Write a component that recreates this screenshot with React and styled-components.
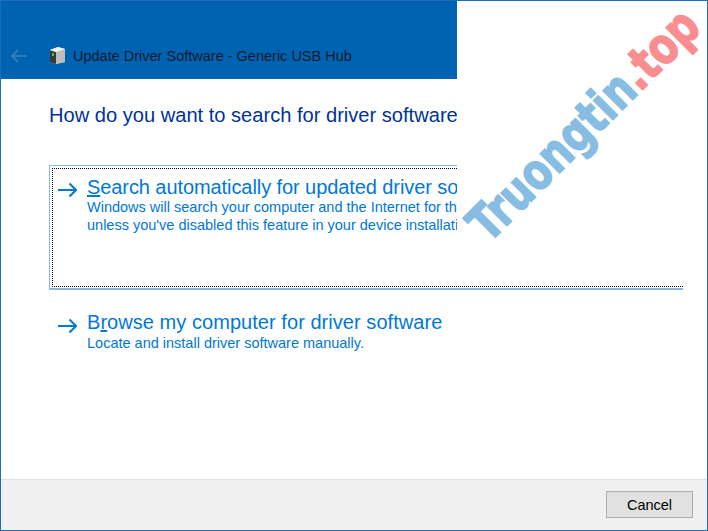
import React from 'react'
import styled, { createGlobalStyle } from 'styled-components'

const GlobalStyle = createGlobalStyle`
    html, body {
        margin: 0;
        padding: 0;
        background: #fff;
    }
    body {
        font-family: "Liberation Sans", Arial, sans-serif;
    }
`

const Window = styled.div`
    position: relative;
    width: 708px;
    height: 531px;
    box-sizing: border-box;
    border: 1px solid #1a6fb8;
    background: #fff;
    display: flex;
    flex-direction: column;
    overflow: hidden;
`

const Header = styled.div`
    width: 456px;
    height: 78px;
    flex: none;
    background: #0063b1;
    box-sizing: border-box;
    padding: 45px 0 0 10px;
    display: flex;
    align-items: flex-start;
`

const BackIcon = styled.svg`
    width: 16px;
    height: 14px;
    margin-top: 3px;
    flex: none;
`

const DeviceIcon = styled.svg`
    width: 17px;
    height: 19px;
    margin-left: 22px;
    flex: none;
`

const HeaderTitle = styled.div`
    margin-left: 7px;
    font-size: 14.5px;
    line-height: 20px;
    color: #0b1a2b;
    white-space: nowrap;
`

const Main = styled.div`
    flex: 1;
    padding: 24px 0 0 48px;
`

const Heading = styled.h1`
    margin: 0;
    width: 408px;
    overflow: hidden;
    white-space: nowrap;
    font-size: 20.1px;
    font-weight: 400;
    line-height: 24px;
    color: #003399;
`

const OptionBox = styled.div`
    position: relative;
    width: 634px;
    height: 125px;
    margin-top: 38px;
    box-sizing: border-box;
    border-left: 1px solid #8ab6e0;
    border-bottom: 2px solid #8ab6e0;
    &::before {
        content: '';
        position: absolute;
        left: 0;
        top: 0;
        width: 407px;
        height: 1px;
        background: #8ab6e0;
    }
    &::after {
        content: '';
        position: absolute;
        left: 2px;
        top: 3px;
        right: 0;
        bottom: 1px;
        border-left: 1px dotted #000;
        border-bottom: 1px dotted #000;
        box-sizing: border-box;
        pointer-events: none;
    }
`

const FocusTop = styled.div`
    position: absolute;
    left: 2px;
    top: 3px;
    width: 405px;
    border-top: 1px dotted #000;
`

const Option = styled.div`
    display: flex;
    align-items: flex-start;
    width: ${props => props.$plain ? '408px' : '407px'};
    overflow: hidden;
    box-sizing: border-box;
    padding: ${props => props.$plain ? '0 0 0 9px' : '11px 0 0 8px'};
    margin-top: ${props => props.$plain ? '20px' : '0'};
`

const ArrowIcon = styled.svg`
    width: 19px;
    height: 16px;
    margin-top: ${props => props.$plain ? '8px' : '6px'};
    flex: none;
`

const OptionText = styled.div`
    margin-left: 10px;
    white-space: nowrap;
    color: #0078d7;
`

const OptionTitle = styled.div`
    font-size: 20px;
    line-height: ${props => props.$tight ? '22px' : '24px'};
    letter-spacing: ${props => props.$tight ? '-0.08px' : '0.05px'};
`

const OptionDesc = styled.div`
    font-size: 14.5px;
    line-height: 18px;
`

const Footer = styled.div`
    height: 51px;
    flex: none;
    box-sizing: border-box;
    background: #f0f0f0;
    border-top: 1px solid #dfdfdf;
    display: flex;
    justify-content: flex-end;
    align-items: flex-start;
    padding: 11px 14px 0 0;
`

const CancelButton = styled.button`
    width: 87px;
    height: 27px;
    box-sizing: border-box;
    border: 1px solid #adadad;
    background: #e1e1e1;
    color: #000;
    font-family: inherit;
    font-size: 14.5px;
    padding: 0;
`

const Watermark = styled.div`
    position: absolute;
    left: 495px;
    top: 195px;
    transform-origin: 0 100%;
    transform: rotate(-45deg) scaleX(0.79);
    font-family: "DejaVu Sans", sans-serif;
    font-weight: 700;
    font-size: 50px;
    line-height: 56px;
    white-space: nowrap;
    color: #88bde3;
    -webkit-text-stroke: 1.5px currentColor;
`

const WatermarkTail = styled.span`
    color: #f98d8f;
`

const Arrow = ({ plain }) => (
    <ArrowIcon $plain={plain} viewBox="0 0 19 16">
        <path d="M0 8 H18 M11.5 1.5 L18 8 L11.5 14.5" fill="none" stroke="#0078d7" strokeWidth="2" />
    </ArrowIcon>
)

const App = () => (
    <Window>
        <GlobalStyle />
        <Header>
            <BackIcon viewBox="0 0 16 14">
                <path d="M1 7 H16 M7 1 L1 7 L7 13" fill="none" stroke="#3a82bd" strokeWidth="1.6" />
            </BackIcon>
            <DeviceIcon viewBox="0 0 17 19">
                <path d="M1 4 L9 1 L16 3 L16 16 L7 18 L1 16 Z" fill="#d8d8d8" />
                <path d="M1 4 L7 6 L7 18 L1 16 Z" fill="#3a3a3a" />
                <path d="M7 6 L16 3 L16 16 L7 18 Z" fill="#bdbdbd" />
                <path d="M1 4 L9 1 L16 3 L7 6 Z" fill="#f2f2f2" />
                <rect x="3" y="7" width="2" height="3" fill="#3fc45a" />
            </DeviceIcon>
            <HeaderTitle>Update Driver Software - Generic USB Hub</HeaderTitle>
        </Header>
        <Main>
            <Heading>How do you want to search for driver software</Heading>
            <OptionBox>
                <FocusTop />
                <Option>
                    <Arrow />
                    <OptionText>
                        <OptionTitle $tight><u>S</u>earch automatically for updated driver so</OptionTitle>
                        <OptionDesc>Windows will search your computer and the Internet for th</OptionDesc>
                        <OptionDesc>unless you've disabled this feature in your device installati</OptionDesc>
                    </OptionText>
                </Option>
            </OptionBox>
            <Option $plain>
                <Arrow plain />
                <OptionText>
                    <OptionTitle>B<u>r</u>owse my computer for driver software</OptionTitle>
                    <OptionDesc>Locate and install driver software manually.</OptionDesc>
                </OptionText>
            </Option>
        </Main>
        <Footer>
            <CancelButton>Cancel</CancelButton>
        </Footer>
        <Watermark>Truongtin<WatermarkTail>.top</WatermarkTail></Watermark>
    </Window>
)

export default App
